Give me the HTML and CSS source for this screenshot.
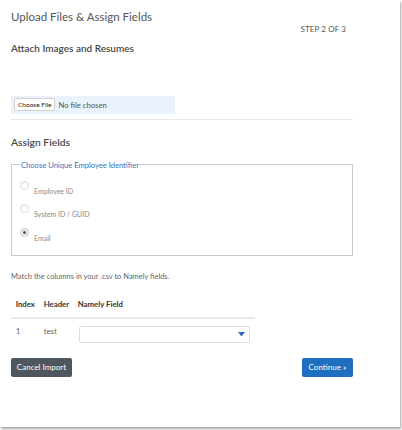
FILE: index.html
```html
<!DOCTYPE html>
<html lang="en">
<head>
<meta charset="utf-8">
<title>Upload Files &amp; Assign Fields</title>
<link rel="stylesheet" href="styles.css">
</head>
<body>
<div class="card">
  <header class="head">
    <h1 class="title">Upload Files &amp; Assign Fields</h1>
    <span class="step">STEP 2 OF 3</span>
  </header>

  <h2 class="sub">Attach Images and Resumes</h2>
  <div class="file-bar">
    <span class="file-btn">Choose File</span>
    <span class="file-text">No file chosen</span>
  </div>
  <hr class="rule">

  <h2 class="section">Assign Fields</h2>
  <fieldset class="idset">
    <legend class="idlegend">Choose Unique Employee Identifier</legend>
    <div class="opt"><span class="radio"></span><span class="opt-label">Employee ID</span></div>
    <div class="opt"><span class="radio"></span><span class="opt-label">System ID / GUID</span></div>
    <div class="opt"><span class="radio checked"></span><span class="opt-label">Email</span></div>
  </fieldset>

  <p class="match">Match the columns in your .csv to Namely fields.</p>

  <table class="map">
    <thead>
      <tr><th class="c-idx">Index</th><th class="c-hdr">Header</th><th class="c-fld">Namely Field</th></tr>
    </thead>
    <tbody>
      <tr>
        <td class="c-idx">1</td>
        <td class="c-hdr">test</td>
        <td class="c-fld">
          <div class="select">
            <svg class="caret" width="7" height="5" viewBox="0 0 7 5"><path d="M0 0H7L3.5 4.5Z" fill="#2a6cc0"/></svg>
          </div>
        </td>
      </tr>
    </tbody>
  </table>

  <div class="actions">
    <button class="btn btn-cancel">Cancel Import</button>
    <button class="btn btn-continue">Continue &raquo;</button>
  </div>
</div>
</body>
</html>
```
FILE: styles.css
```css
* { box-sizing: border-box; }

html, body {
  margin: 0;
  padding: 0;
  background: #ffffff;
}

body {
  font-family: Lato, "Liberation Sans", Arial, sans-serif;
  color: #555;
  width: 402px;
  height: 430px;
  overflow: hidden;
}

.card {
  width: 400px;
  height: 427px;
  background: #fff;
  padding: 11px 47px 0 11px;
  box-shadow: 1px 2px 2px rgba(0, 0, 0, 0.35);
}

.head {
  display: flex;
  justify-content: space-between;
  align-items: flex-start;
  padding-right: 7px;
}

.title {
  margin: 0;
  font-size: 11.5px;
  line-height: 12px;
  font-weight: 400;
  color: #555;
}

.step {
  margin-top: 13.6px;
  font-size: 8px;
  line-height: 8px;
  color: #555;
  letter-spacing: 0.1px;
}

.sub {
  margin: 10px 0 0;
  font-size: 10px;
  line-height: 10px;
  font-weight: 600;
  color: #484848;
}

.file-bar {
  margin-top: 43.5px;
  width: 164px;
  height: 17.5px;
  background: #eaf2fc;
  display: flex;
  align-items: center;
  padding: 0 3px;
}

.file-btn {
  display: inline-block;
  height: 13px;
  line-height: 11px;
  padding: 0 3px;
  background: #fff;
  border: 1px solid #cfcfcf;
  border-radius: 2px;
  font-size: 6.5px;
  color: #222;
}

.file-text {
  margin-left: 3px;
  font-size: 7.7px;
  color: #555;
}

.rule {
  margin: 5px 0 0;
  border: 0;
  border-top: 1px solid #e6e6e6;
  height: 0;
}

.section {
  margin: 17px 0 0;
  font-size: 10.3px;
  line-height: 11px;
  font-weight: 600;
  color: #484848;
}

.idset {
  margin: 12px 0 0;
  width: 100%;
  border: 1px solid #c9c9c9;
  padding: 11px 0 13px 8px;
}

.idlegend {
  padding: 0 1px;
  font-size: 7.6px;
  line-height: 10px;
  color: #3c72b8;
}

.opt {
  display: flex;
  align-items: flex-start;
  height: 23.5px;
}

.opt:last-child { height: 14px; }

.radio {
  width: 9px;
  height: 9px;
  border-radius: 50%;
  border: 1px solid #dcdcdc;
  background: #fff;
  box-shadow: inset 0 1px 1px rgba(0, 0, 0, 0.06);
  position: relative;
  flex: none;
}

.radio.checked {
  border-color: #cacaca;
  background: #ececec;
}

.radio.checked::after {
  content: "";
  position: absolute;
  left: 2px;
  top: 2px;
  width: 3px;
  height: 3px;
  border-radius: 50%;
  background: #555;
}

.opt-label {
  margin: 6px 0 0 5px;
  font-size: 7px;
  line-height: 8px;
  color: #888;
}

.match {
  margin: 17px 0 0;
  font-size: 7.5px;
  line-height: 8px;
  color: #666;
}

.map {
  margin-top: 18px;
  width: 244px;
  border-collapse: collapse;
  table-layout: fixed;
}

.map th {
  text-align: left;
  font-size: 7.8px;
  line-height: 10px;
  font-weight: 700;
  color: #333;
  padding: 0 5px 8px 4.7px;
  border-bottom: 2px solid #e9e9e9;
  white-space: nowrap;
}

.map td {
  vertical-align: top;
  font-size: 7.8px;
  line-height: 10px;
  color: #666;
  padding: 7px 5px 0 4.7px;
}

.map .c-idx { width: 28px; }
.map .c-hdr { width: 34px; }
.map td.c-fld { padding-left: 6px; }

.select {
  height: 17px;
  border: 1px solid #dedede;
  border-radius: 2px;
  background: #fff;
  display: flex;
  align-items: center;
  justify-content: flex-end;
  padding-right: 4px;
}

.caret { display: block; }

.actions {
  margin-top: 15px;
  display: flex;
  justify-content: space-between;
}

.btn {
  height: 19px;
  border: 0;
  border-radius: 2px;
  padding: 0;
  font-family: inherit;
  font-size: 8px;
  line-height: 19px;
  color: #fff;
  white-space: nowrap;
  text-align: center;
  cursor: pointer;
}

.btn-cancel { background: #4e565e; width: 61px; }
.btn-continue { background: #1e6fc0; width: 51px; }
```
